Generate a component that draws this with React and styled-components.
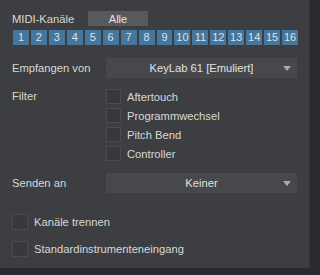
import styled, { createGlobalStyle } from "styled-components";

const Global = createGlobalStyle`
  html, body {
    margin: 0;
    background: #2a2b2e;
  }
  body {
    font-family: "Liberation Sans", Arial, sans-serif;
    font-size: 11px;
  }
`;

const Frame = styled.div`
  width: 320px;
  height: 275px;
  display: flex;
  background: #2a2b2e;
`;

const Panel = styled.div`
  width: 310px;
  height: 268px;
  box-sizing: border-box;
  background: #3d3e41;
  border-right: 1px solid #343538;
  padding: 11px 12px 0 12px;
  display: flex;
  flex-direction: column;
  color: #dcdcdc;
`;

const HeaderRow = styled.div`
  display: flex;
  align-items: center;
  height: 15px;
`;

const Label = styled.div`
  width: ${({ $w }) => $w || 94}px;
  flex-shrink: 0;
  color: #d8d8d8;
  font-size: 11.2px;
`;

const AllButton = styled.button`
  width: 60px;
  height: 15px;
  margin-left: 1px;
  padding: 0;
  border: none;
  background: #58595c;
  color: #e4e4e4;
  font-family: inherit;
  font-size: 11px;
`;

const Channels = styled.div`
  display: grid;
  grid-template-columns: repeat(16, 1fr);
  gap: 2px;
  margin: 4px 0 0 1px;
  width: 285px;
  height: 15px;
`;

const Channel = styled.div`
  background: #46769b;
  color: #d6e2ec;
  font-size: 11px;
  display: flex;
  align-items: center;
  justify-content: center;
  line-height: 15px;
`;

const Row = styled.div`
  display: flex;
  align-items: center;
  margin-top: ${({ $top }) => $top}px;
`;

const Select = styled.div`
  position: relative;
  width: 192px;
  height: 20px;
  background: #47484b;
  display: flex;
  align-items: center;
  justify-content: center;
  color: #e0e0e0;
  font-size: 11.2px;
`;

const Arrow = styled.span`
  position: absolute;
  right: 6px;
  top: 8px;
  width: 0;
  height: 0;
  border-left: 4px solid transparent;
  border-right: 4px solid transparent;
  border-top: 5px solid #a9aaac;
`;

const FilterRow = styled.div`
  display: flex;
  align-items: flex-start;
  margin-top: 11px;
`;

const FilterLabel = styled(Label)`
  line-height: 15px;
`;

const CheckList = styled.div`
  display: flex;
  flex-direction: column;
  gap: 4px;
`;

const CheckItem = styled.label`
  display: flex;
  align-items: center;
  gap: 6px;
  height: ${({ $size }) => $size || 15}px;
  color: #d8d8d8;
  font-size: 11.2px;
`;

const Box = styled.span`
  width: ${({ $size }) => $size || 15}px;
  height: ${({ $size }) => $size || 15}px;
  box-sizing: border-box;
  border: 1px solid #4b4c50;
  background: #37383b;
  flex-shrink: 0;
`;

const channels = Array.from({ length: 16 }, (_, i) => i + 1);
const filters = ["Aftertouch", "Programmwechsel", "Pitch Bend", "Controller"];

export default function App() {
  return (
    <>
      <Global />
      <Frame>
        <Panel>
          <HeaderRow>
            <Label $w={75}>MIDI-Kanäle</Label>
            <AllButton>Alle</AllButton>
          </HeaderRow>
          <Channels>
            {channels.map((n) => (
              <Channel key={n}>{n}</Channel>
            ))}
          </Channels>

          <Row $top={13}>
            <Label>Empfangen von</Label>
            <Select>
              KeyLab 61 [Emuliert]
              <Arrow />
            </Select>
          </Row>

          <FilterRow>
            <FilterLabel>Filter</FilterLabel>
            <CheckList>
              {filters.map((f) => (
                <CheckItem key={f}>
                  <Box />
                  {f}
                </CheckItem>
              ))}
            </CheckList>
          </FilterRow>

          <Row $top={12}>
            <Label>Senden an</Label>
            <Select>
              Keiner
              <Arrow />
            </Select>
          </Row>

          <Row $top={21}>
            <CheckItem $size={16}>
              <Box $size={16} />
              Kanäle trennen
            </CheckItem>
          </Row>
          <Row $top={11}>
            <CheckItem $size={16}>
              <Box $size={16} />
              Standardinstrumenteneingang
            </CheckItem>
          </Row>
        </Panel>
      </Frame>
    </>
  );
}
